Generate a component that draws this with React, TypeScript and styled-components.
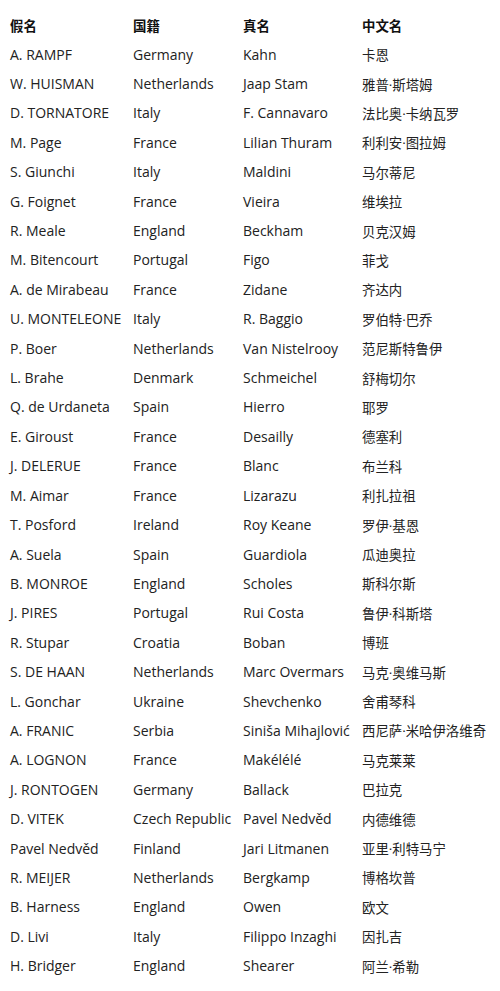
import React from "react";
import styled, { createGlobalStyle } from "styled-components";

const Global = createGlobalStyle`
  html, body { margin: 0; padding: 0; background: #fff; }
  body { font-family: "Open Sans", "Noto Sans CJK SC", sans-serif; color: #222; }
`;

const Table = styled.div`
  display: grid;
  grid-template-columns: 123px 110px 119px 1fr;
  grid-auto-rows: 29.42px;
  padding: 10px 0 0 10px;
  width: 500px;
  box-sizing: border-box;
`;

const Cell = styled.div<{ $head?: boolean; $cjk?: boolean }>`
  display: flex;
  align-items: center;
  white-space: nowrap;
  font-size: ${(p) => (p.$head || p.$cjk ? "13.4px" : "14px")};
  font-weight: ${(p) => (p.$head ? 700 : 400)};
  color: ${(p) => (p.$head ? "#111" : "#222")};
  font-family: ${(p) =>
    p.$head
      ? '"Noto Sans CJK SC", sans-serif'
      : '"Open Sans", "Noto Sans CJK SC", sans-serif'};
`;

const header = ["假名", "国籍", "真名", "中文名"];

const rows: string[][] = [
  ["A. RAMPF", "Germany", "Kahn", "卡恩"],
  ["W. HUISMAN", "Netherlands", "Jaap Stam", "雅普·斯塔姆"],
  ["D. TORNATORE", "Italy", "F. Cannavaro", "法比奥·卡纳瓦罗"],
  ["M. Page", "France", "Lilian Thuram", "利利安·图拉姆"],
  ["S. Giunchi", "Italy", "Maldini", "马尔蒂尼"],
  ["G. Foignet", "France", "Vieira", "维埃拉"],
  ["R. Meale", "England", "Beckham", "贝克汉姆"],
  ["M. Bitencourt", "Portugal", "Figo", "菲戈"],
  ["A. de Mirabeau", "France", "Zidane", "齐达内"],
  ["U. MONTELEONE", "Italy", "R. Baggio", "罗伯特·巴乔"],
  ["P. Boer", "Netherlands", "Van Nistelrooy", "范尼斯特鲁伊"],
  ["L. Brahe", "Denmark", "Schmeichel", "舒梅切尔"],
  ["Q. de Urdaneta", "Spain", "Hierro", "耶罗"],
  ["E. Giroust", "France", "Desailly", "德塞利"],
  ["J. DELERUE", "France", "Blanc", "布兰科"],
  ["M. Aimar", "France", "Lizarazu", "利扎拉祖"],
  ["T. Posford", "Ireland", "Roy Keane", "罗伊·基恩"],
  ["A. Suela", "Spain", "Guardiola", "瓜迪奥拉"],
  ["B. MONROE", "England", "Scholes", "斯科尔斯"],
  ["J. PIRES", "Portugal", "Rui Costa", "鲁伊·科斯塔"],
  ["R. Stupar", "Croatia", "Boban", "博班"],
  ["S. DE HAAN", "Netherlands", "Marc Overmars", "马克·奥维马斯"],
  ["L. Gonchar", "Ukraine", "Shevchenko", "舍甫琴科"],
  ["A. FRANIC", "Serbia", "Siniša Mihajlović", "西尼萨·米哈伊洛维奇"],
  ["A. LOGNON", "France", "Makélélé", "马克莱莱"],
  ["J. RONTOGEN", "Germany", "Ballack", "巴拉克"],
  ["D. VITEK", "Czech Republic", "Pavel Nedvěd", "内德维德"],
  ["Pavel Nedvěd", "Finland", "Jari Litmanen", "亚里·利特马宁"],
  ["R. MEIJER", "Netherlands", "Bergkamp", "博格坎普"],
  ["B. Harness", "England", "Owen", "欧文"],
  ["D. Livi", "Italy", "Filippo Inzaghi", "因扎吉"],
  ["H. Bridger", "England", "Shearer", "阿兰·希勒"],
];

export default function App() {
  return (
    <>
      <Global />
      <Table>
        {header.map((h) => (
          <Cell key={h} $head>
            {h}
          </Cell>
        ))}
        {rows.map((r, i) =>
          r.map((c, j) => (
            <Cell key={`${i}-${j}`} $cjk={j === 3}>
              {c}
            </Cell>
          ))
        )}
      </Table>
    </>
  );
}
